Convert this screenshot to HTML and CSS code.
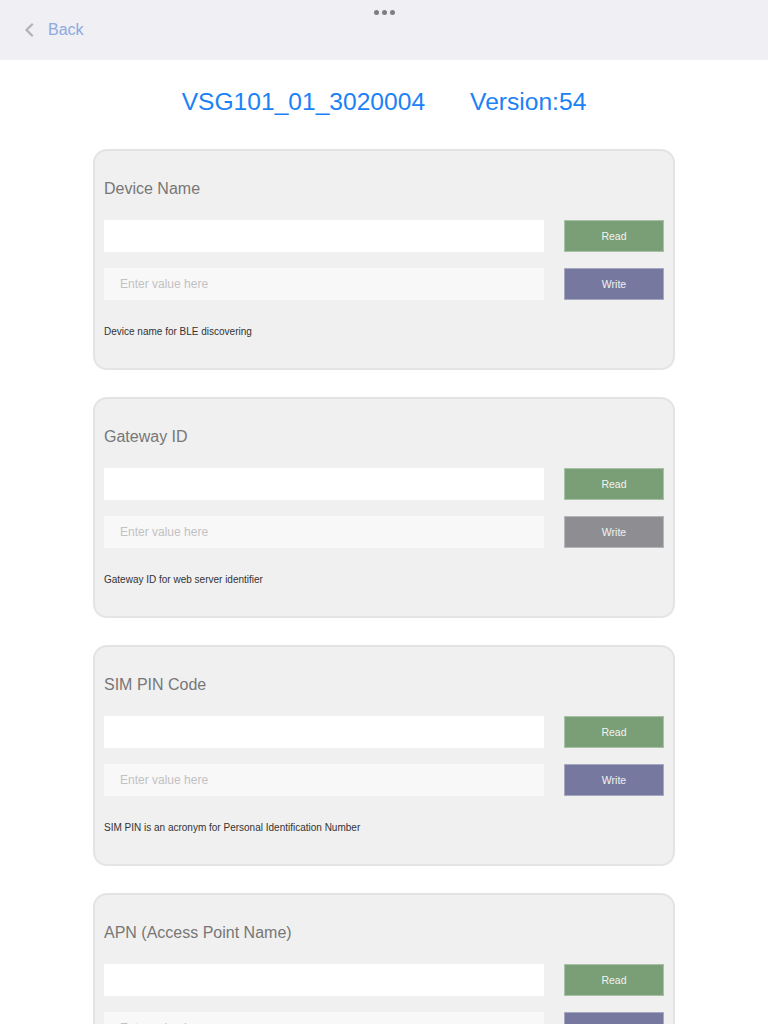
FILE: index.html
```html
<!DOCTYPE html>
<html>
<head>
<meta charset="utf-8">
<link rel="stylesheet" href="styles.css">
</head>
<body>
<header class="topbar">
  <div class="dots"><span></span><span></span><span></span></div>
  <div class="back">
    <svg class="chev" width="10" height="14" viewBox="0 0 10 14"><path d="M8 1.5 L2.5 7 L8 12.5" fill="none" stroke="#b4b4b8" stroke-width="2.4" stroke-linecap="round" stroke-linejoin="round"/></svg>
    <span class="back-label">Back</span>
  </div>
</header>
<main class="content">
  <h1 class="device-title"><span>VSG101_01_3020004</span><span>Version:54</span></h1>
  <section class="card">
    <h2 class="card-title">Device Name</h2>
    <div class="row"><div class="field field-read"></div><button class="btn btn-read">Read</button></div>
    <div class="row"><div class="field field-write">Enter value here</div><button class="btn btn-write">Write</button></div>
    <p class="desc">Device name for BLE discovering</p>
  </section>
  <section class="card">
    <h2 class="card-title">Gateway ID</h2>
    <div class="row"><div class="field field-read"></div><button class="btn btn-read">Read</button></div>
    <div class="row"><div class="field field-write">Enter value here</div><button class="btn btn-disabled">Write</button></div>
    <p class="desc">Gateway ID for web server identifier</p>
  </section>
  <section class="card">
    <h2 class="card-title">SIM PIN Code</h2>
    <div class="row"><div class="field field-read"></div><button class="btn btn-read">Read</button></div>
    <div class="row"><div class="field field-write">Enter value here</div><button class="btn btn-write">Write</button></div>
    <p class="desc">SIM PIN is an acronym for Personal Identification Number</p>
  </section>
  <section class="card">
    <h2 class="card-title">APN (Access Point Name)</h2>
    <div class="row"><div class="field field-read"></div><button class="btn btn-read">Read</button></div>
    <div class="row"><div class="field field-write">Enter value here</div><button class="btn btn-write">Write</button></div>
    <p class="desc">Access Point Name</p>
  </section>
</main>
</body>
</html>
```
FILE: styles.css
```css
* { box-sizing: border-box; }
html, body { margin: 0; padding: 0; background: #ffffff; }
body {
  font-family: "Liberation Sans", Arial, sans-serif;
  width: 768px;
  height: 1024px;
  overflow: hidden;
}
.topbar {
  height: 60px;
  background: #efeff4;
  position: relative;
  padding-top: 20px;
}
.dots {
  position: absolute;
  top: 10px;
  left: 0;
  right: 0;
  display: flex;
  justify-content: center;
  gap: 3px;
}
.dots span {
  width: 5px;
  height: 5px;
  border-radius: 50%;
  background: #7d7d82;
}
.back {
  display: flex;
  align-items: center;
  height: 20px;
  padding-left: 24px;
}
.chev { display: block; }
.back-label {
  margin-left: 14px;
  font-size: 16px;
  color: #8ea9df;
  line-height: 20px;
}
.content {
  display: flex;
  flex-direction: column;
  align-items: center;
  padding-bottom: 40px;
}
.device-title {
  margin: 28px 0 0;
  height: 28px;
  display: flex;
  gap: 45px;
  font-weight: normal;
  font-size: 24.6px;
  line-height: 28px;
  color: #1b82f6;
}
.card {
  width: 582px;
  margin-top: 33px;
  background: #f0f0f0;
  border: 2px solid #e4e4e4;
  border-radius: 14px;
  padding: 28px 9px 29px;
}
.card + .card { margin-top: 27px; }
.card-title {
  margin: 0 0 21px;
  font-size: 16px;
  line-height: 20px;
  font-weight: normal;
  color: #777777;
}
.row {
  display: flex;
  gap: 20px;
  height: 32px;
}
.row + .row { margin-top: 16px; }
.field {
  flex: 1;
  height: 32px;
  font-size: 12px;
  line-height: 32px;
  padding-left: 16px;
  color: #c2c2c2;
}
.field-read { background: #ffffff; }
.field-write { background: #f8f8f8; }
.btn {
  width: 100px;
  height: 32px;
  border: 1px solid rgba(255,255,255,0.35);
  padding: 0;
  font-family: "Liberation Sans", Arial, sans-serif;
  font-size: 10.5px;
  color: #f2f2f2;
}
.btn-read { background: #7a9f77; }
.btn-write { background: #77789f; }
.btn-disabled { background: #8e8e92; }
.desc {
  margin: 25px 0 0;
  font-size: 10px;
  line-height: 14px;
  color: #333333;
}
```
